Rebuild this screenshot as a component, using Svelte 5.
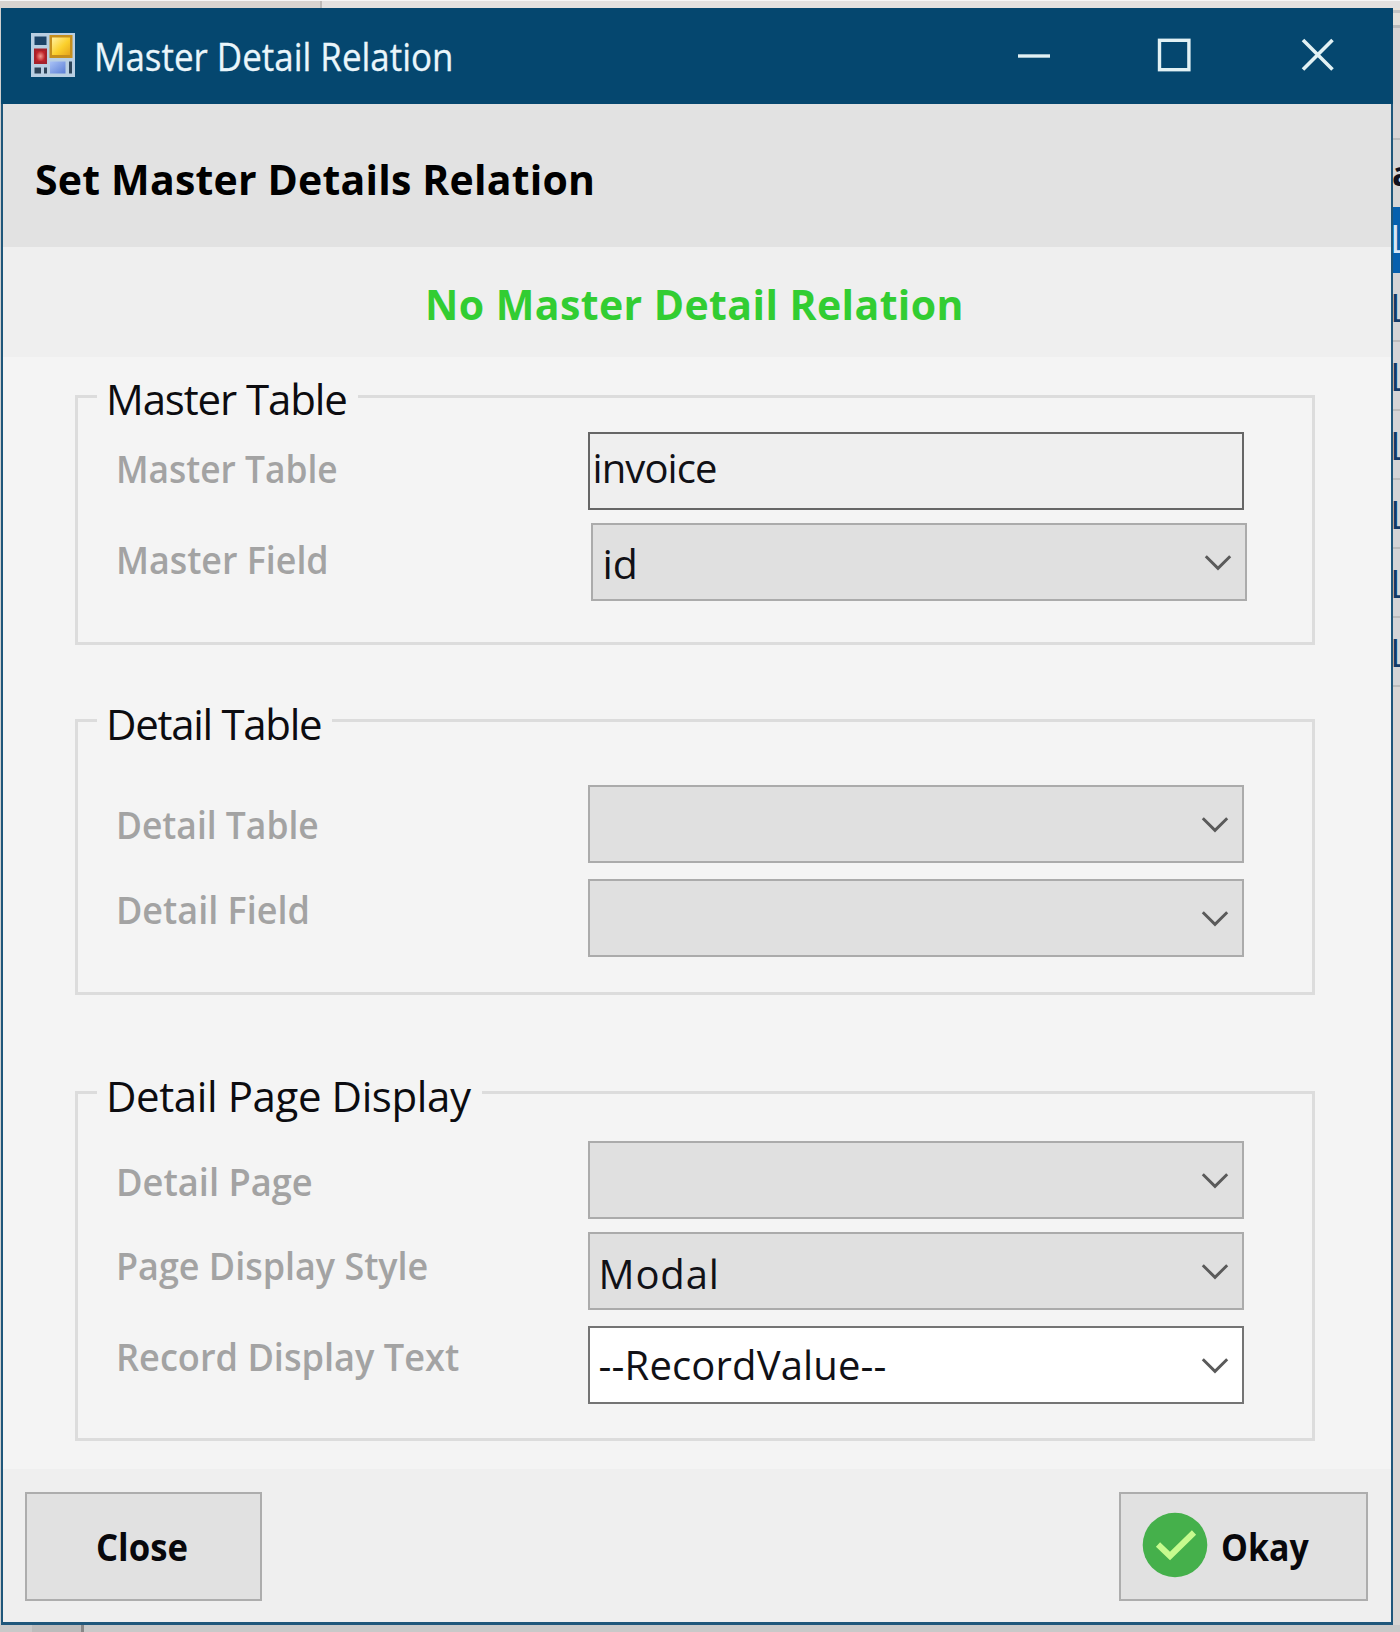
<script>
  const groups = [
    {
      title: 'Master Table',
      name: 'master',
      rows: [
        { label: 'Master Table', kind: 'text', value: 'invoice', stretch: 0.93, gap: 34, drop: 16 },
        { label: 'Master Field', kind: 'combo', value: 'id', stretch: 0.942, gap: 13, drop: 16, shifted: true }
      ]
    },
    {
      title: 'Detail Table',
      name: 'detail',
      rows: [
        { label: 'Detail Table', kind: 'combo', value: '', stretch: 0.932, gap: 63, drop: 19 },
        { label: 'Detail Field', kind: 'combo', value: '', stretch: 0.946, gap: 16, drop: 10 }
      ]
    },
    {
      title: 'Detail Page Display',
      name: 'display',
      rows: [
        { label: 'Detail Page', kind: 'combo', value: '', stretch: 0.954, gap: 47, drop: 20 },
        { label: 'Page Display Style', kind: 'combo', value: 'Modal', stretch: 0.945, gap: 13, drop: 13, roomy: true },
        { label: 'Record Display Text', kind: 'editable', value: '--RecordValue--', stretch: 0.951, gap: 16, drop: 10 }
      ]
    }
  ];
  const gridRows = ['L', 'L', 'L', 'L', 'L', 'L'];
</script>

<div class="desktop">
  <div class="behind-top"><span></span></div>

  <main class="window">
    <header class="titlebar">
      <svg class="app-icon" viewBox="0 0 44 44" width="44" height="44" aria-hidden="true">
        <defs>
          <linearGradient id="gold" x1="0" y1="0" x2="1" y2="1">
            <stop offset="0" stop-color="#fff0a0" />
            <stop offset="0.55" stop-color="#fbd02c" />
            <stop offset="1" stop-color="#e5a51c" />
          </linearGradient>
          <radialGradient id="red">
            <stop offset="0" stop-color="#f29a90" />
            <stop offset="1" stop-color="#bd2329" />
          </radialGradient>
          <linearGradient id="blue" x1="0" y1="0" x2="1" y2="1">
            <stop offset="0" stop-color="#a9c2f6" />
            <stop offset="1" stop-color="#5c7fd6" />
          </linearGradient>
        </defs>
        <rect width="44" height="44" fill="#b9cfe2" />
        <rect x="3.5" y="3.5" width="12" height="8.5" fill="#1c4468" />
        <rect x="3" y="15.5" width="13" height="15.5" fill="#a5222b" />
        <rect x="5" y="18" width="9" height="10.5" fill="url(#red)" />
        <rect x="18.5" y="2" width="23" height="23" fill="#c58f1d" />
        <rect x="21" y="4.5" width="18" height="17.5" fill="url(#gold)" />
        <rect x="3.5" y="34.5" width="6.5" height="6" fill="#2d4459" />
        <rect x="13" y="34.5" width="3" height="6" fill="#2d4459" />
        <rect x="19" y="28.5" width="15.5" height="12" fill="url(#blue)" />
        <rect x="38" y="28.5" width="3" height="12" fill="#2d4459" />
      </svg>
      <span class="caption">Master Detail Relation</span>
      <svg class="controls" viewBox="0 0 316 34" width="316" height="34" fill="none" stroke="#e2f1f4" stroke-width="3.4" aria-hidden="true">
        <path d="M0 18H32" />
        <rect x="141.5" y="2.3" width="29.4" height="29.4" />
        <path d="M285 2L314.5 31.5M314.5 2L285 31.5" stroke-width="3.6" />
      </svg>
    </header>

    <section class="heading"><h1>Set Master Details Relation</h1></section>
    <section class="status"><span>No Master Detail Relation</span></section>

    <section class="form">
      {#each groups as group}
        <div class="group {group.name}">
          <div class="legend-line"><span class="legend">{group.title}</span></div>
          {#each group.rows as row}
            <div class="row" style:margin-top="{row.gap}px">
              <div class="label" style:padding-top="{row.drop}px">
                <span style:transform="scaleX({row.stretch})">{row.label}</span>
              </div>
              <div class="field {row.kind}" class:shifted={row.shifted} class:roomy={row.roomy}>
                <span class="value">{row.value}</span>
                {#if row.kind !== 'text'}
                  <svg viewBox="0 0 28 18" width="28" height="18" fill="none" stroke="#5a5a5a" stroke-width="2.9" aria-hidden="true">
                    <path d="M1.8 3.2L14 15.4L26.2 3.2" />
                  </svg>
                {/if}
              </div>
            </div>
          {/each}
        </div>
      {/each}
    </section>

    <footer class="actions">
      <button class="close" type="button"><span>Close</span></button>
      <button class="okay" type="button">
        <svg viewBox="0 0 66 66" width="66" height="66" aria-hidden="true">
          <circle cx="33" cy="33" r="32.3" fill="#45b04b" />
          <path d="M16 32.5L28 44L52 20.5" fill="none" stroke="#c6fb8e" stroke-width="6" />
        </svg>
        <span>Okay</span>
      </button>
    </footer>
  </main>

  <aside class="behind-right">
    <div class="blank"></div>
    <div class="column-head"><span>a</span></div>
    <div class="record selected"><span>L</span></div>
    {#each gridRows as letter}
      <div class="record"><span>{letter}</span></div>
    {/each}
  </aside>

  <div class="behind-bottom"><span></span></div>
</div>

<style>
  :global(body) { margin: 0; background: #d6d6d6; }
  .desktop {
    box-sizing: border-box;
    width: 1400px;
    height: 1632px;
    overflow: hidden;
    display: grid;
    grid-template: 8px 1617px 7px / 1393px 7px;
    font-family: "Open Sans", "Noto Sans", sans-serif;
    background: #cfcfcf;
  }
  .behind-top {
    grid-column: 1 / 3;
    background: #e3e1e0;
    border-top: 1px solid #f6f6f6;
    box-sizing: border-box;
  }
  .behind-top span {
    display: block;
    box-sizing: border-box;
    width: 322px;
    height: 7px;
    background: #d8d4d0;
    border-right: 2px solid #bdbab8;
  }
  .behind-bottom { grid-column: 1 / 3; background: #c9c9c9; }
  .behind-bottom span {
    display: block;
    margin-left: 32px;
    width: 49px;
    height: 7px;
    background: #bcbcbc;
    border-right: 3px solid #888;
  }

  .window {
    display: flex;
    flex-direction: column;
    box-sizing: border-box;
    margin-left: 1px;
    border: solid #1f577b;
    border-width: 0 2px 3px 2px;
    background: #f4f4f4;
  }
  .titlebar {
    display: flex;
    align-items: center;
    box-sizing: border-box;
    height: 96px;
    margin: 0 -2px 0 -2px;
    padding: 0 59px 3px 30px;
    background: #05476f;
    color: #eaf6fb;
  }
  .caption {
    margin: 3px 0 0 18.5px;
    font-size: 38.5px;
    line-height: 44px;
    white-space: nowrap;
    transform: scaleX(0.907);
    transform-origin: left;
    -webkit-text-stroke: 0.3px #eaf6fb;
  }
  .controls { margin-left: auto; }
  .heading,
  .status {
    display: flex;
    align-items: center;
    box-sizing: border-box;
  }
  .heading {
    height: 143px;
    padding: 7px 0 0 32px;
    background: #e2e2e2;
  }
  h1 {
    margin: 0;
    font-size: 41px;
    font-weight: 700;
    line-height: 48px;
    letter-spacing: 0.2px;
    color: #000;
  }
  .status {
    justify-content: center;
    height: 110px;
    padding: 4px 5px 0 0;
    background: #efefef;
    color: #32cd32;
    font-size: 41px;
    font-weight: 700;
    letter-spacing: 0.42px;
  }

  .form { height: 1112px; padding: 38px 76px 0 72px; box-sizing: border-box; }
  .group {
    box-sizing: border-box;
    width: 1240px;
    border: 3px solid #dcdcdc;
  }
  .master { height: 250px; }
  .detail { height: 276px; margin-top: 74px; }
  .display { height: 350px; margin-top: 96px; }
  .legend-line { height: 0; display: flex; align-items: center; padding-left: 19px; }
  .legend {
    padding: 0 11px 0 9px;
    margin-top: 1px;
    line-height: 44px;
    font-size: 42px;
    white-space: nowrap;
    background: #f4f4f4;
    color: #0c0c10;
  }
  .master .legend { letter-spacing: -1.12px; }
  .detail .legend { letter-spacing: -1.3px; }
  .display .legend { letter-spacing: -0.4px; }
  .detail .legend,
  .display .legend { margin-top: 3px; }

  .row { display: flex; align-items: flex-start; height: 78px; }
  .label {
    box-sizing: border-box;
    width: 509.5px;
    height: 78px;
    padding-left: 37.5px;
    font-size: 38px;
    font-weight: 640;
    line-height: 40px;
    white-space: nowrap;
    color: #a3a3a3;
  }
  .label span { display: inline-block; transform-origin: left; }
  .field {
    display: flex;
    align-items: center;
    justify-content: space-between;
    box-sizing: border-box;
    width: 656px;
    height: 78px;
    padding: 0 13px 0 9px;
    border: 2.5px solid #ababab;
    background: #e0e0e0;
    color: #111116;
    font-size: 40px;
    line-height: 44px;
  }
  .field.text { border-color: #666; background: #efefef; padding: 0 0 7px 3px; }
  .text .value { letter-spacing: -0.9px; }
  .shifted { margin-left: 3px; padding-left: 10px; font-size: 41px; }
  .shifted .value { margin-top: 2px; }
  .roomy { letter-spacing: 0.9px; }
  .roomy .value { margin-top: 5px; }
  .editable { border-color: #747474; background: #fff; letter-spacing: 0.15px; }
  .editable .value { margin-top: -1px; }

  .actions {
    display: flex;
    justify-content: space-between;
    align-items: flex-start;
    box-sizing: border-box;
    height: 153px;
    padding: 23px 23px 0 22px;
    background: #efefef;
  }
  button {
    display: flex;
    align-items: center;
    box-sizing: border-box;
    height: 109px;
    margin: 0;
    padding: 0;
    border: 2.5px solid #adadad;
    border-radius: 0;
    background: #e1e1e1;
    color: #08080c;
    font: 700 38px/44px "Open Sans", "Noto Sans", sans-serif;
  }
  button span { display: block; margin-top: -1px; transform-origin: left; }
  .close { width: 237px; padding-left: 69px; }
  .close span { transform: scaleX(0.913); }
  .okay { width: 249px; padding-left: 21px; }
  .okay span { margin-left: 13px; transform: scaleX(0.892); }
  .okay svg { margin-top: -4px; }

  .behind-right { overflow: hidden; background: #d9d5d3; }
  .blank {
    box-sizing: border-box;
    height: 132px;
    border-bottom: 2px solid #bbb;
    background: linear-gradient(#e9e2da 0 2px, #c4c4c4 2px 5px, #e4e0da 5px 17px, #bbb 17px 20px, #d8d4d4 20px);
  }
  .column-head { height: 67px; overflow: hidden; background: #d6d6d6; }
  .column-head span {
    display: block;
    margin: 16px 0 0 -1px;
    font-size: 34px;
    font-weight: 700;
    line-height: 34px;
    color: #10101c;
  }
  .record {
    box-sizing: border-box;
    height: 69px;
    overflow: hidden;
    border-bottom: 2px solid #bcbcbc;
    background: #d4d4d6;
    color: #123a68;
  }
  .record span {
    display: block;
    margin: 14px 0 0 -3px;
    font-size: 38px;
    line-height: 40px;
  }
  .selected { height: 66px; border-bottom: 0; background: #0660ae; color: #d9e6f5; }
  .selected span { margin-top: 11px; }
</style>
